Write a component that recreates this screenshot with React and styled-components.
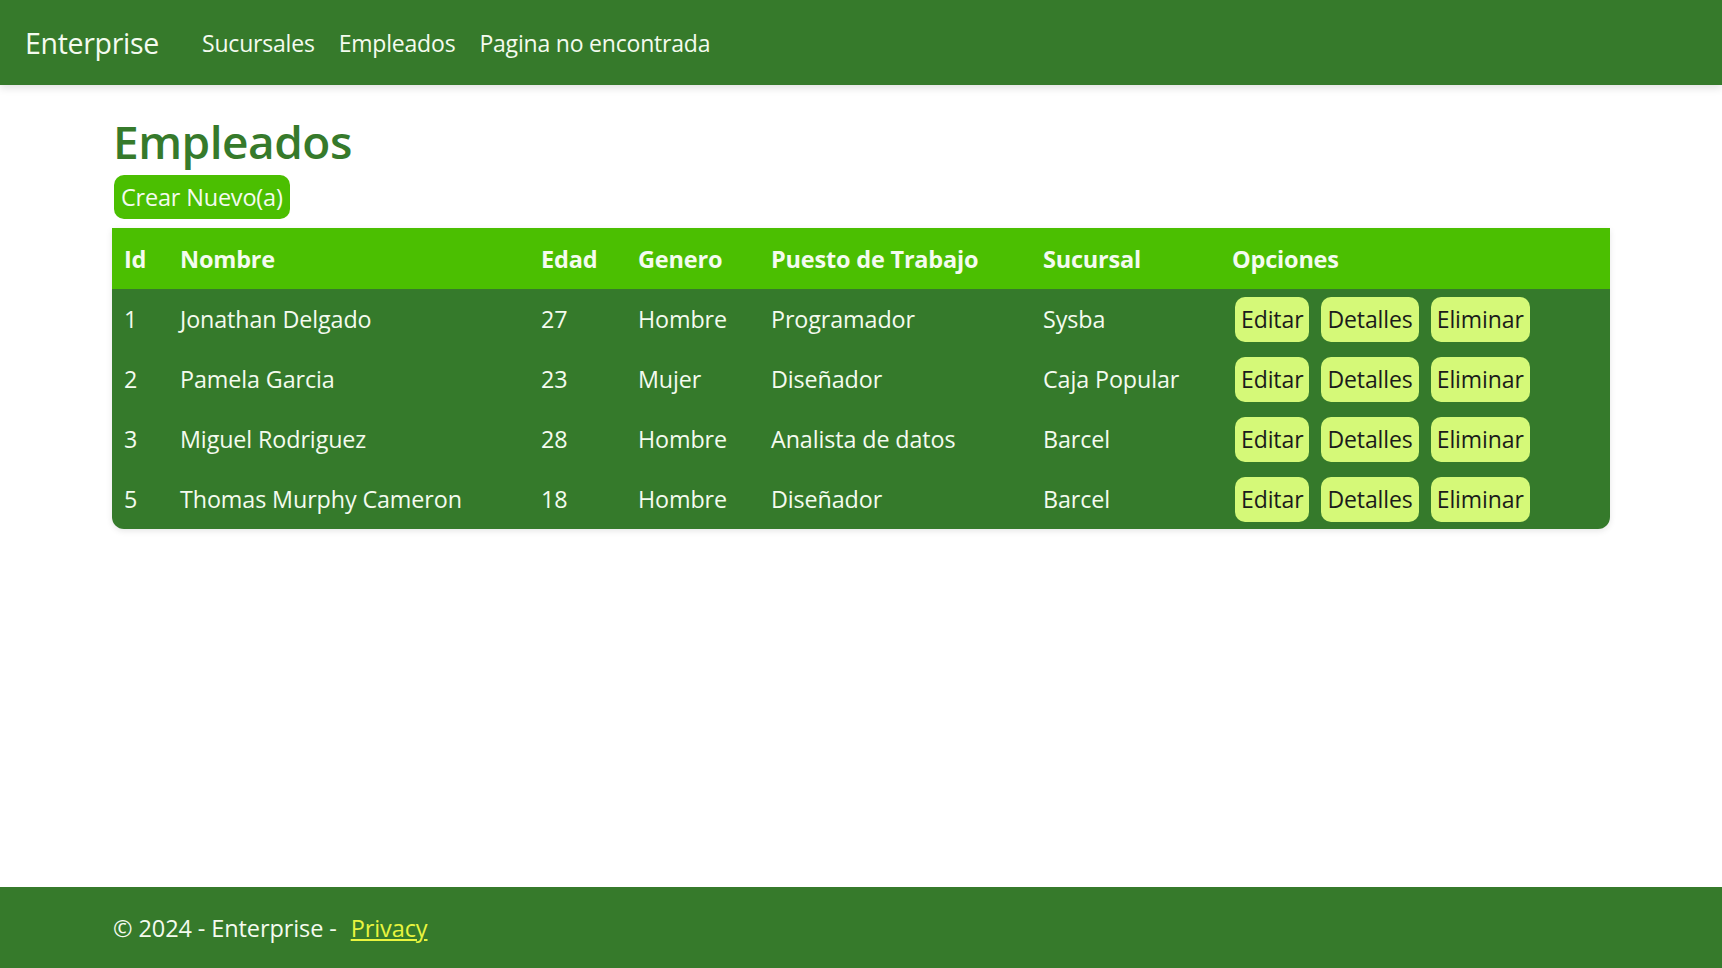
import React from 'react';
import styled, { createGlobalStyle } from 'styled-components';

const empleados = [
  { id: 1, nombre: 'Jonathan Delgado', edad: 27, genero: 'Hombre', puesto: 'Programador', sucursal: 'Sysba' },
  { id: 2, nombre: 'Pamela Garcia', edad: 23, genero: 'Mujer', puesto: 'Diseñador', sucursal: 'Caja Popular' },
  { id: 3, nombre: 'Miguel Rodriguez', edad: 28, genero: 'Hombre', puesto: 'Analista de datos', sucursal: 'Barcel' },
  { id: 5, nombre: 'Thomas Murphy Cameron', edad: 18, genero: 'Hombre', puesto: 'Diseñador', sucursal: 'Barcel' },
];

const columns = [
  { label: 'Id', width: 56 },
  { label: 'Nombre', width: 361 },
  { label: 'Edad', width: 97 },
  { label: 'Genero', width: 133 },
  { label: 'Puesto de Trabajo', width: 272 },
  { label: 'Sucursal', width: 189 },
  { label: 'Opciones', width: 390 },
];

const GlobalStyle = createGlobalStyle`
  html, body {
    margin: 0;
    padding: 0;
  }
  body {
    font-family: "Open Sans", "Noto Sans", sans-serif;
    background: #fff;
  }
`;

const App = () => {
  return (
    <>
      <GlobalStyle />
      <Page>
        <NavBar>
          <Brand href="#">Enterprise</Brand>
          <NavLinks>
            <NavLink href="#">Sucursales</NavLink>
            <NavLink href="#">Empleados</NavLink>
            <NavLink href="#">Pagina no encontrada</NavLink>
          </NavLinks>
        </NavBar>

        <Main>
          <Heading>Empleados</Heading>
          <CreateButton>Crear Nuevo(a)</CreateButton>
          <Table>
            <colgroup>
              {columns.map((c) => (
                <col key={c.label} style={{ width: c.width }} />
              ))}
            </colgroup>
            <thead>
              <tr>
                {columns.map((c) => (
                  <Th key={c.label}>{c.label}</Th>
                ))}
              </tr>
            </thead>
            <tbody>
              {empleados.map((e) => (
                <tr key={e.id}>
                  <Td>{e.id}</Td>
                  <Td>{e.nombre}</Td>
                  <Td>{e.edad}</Td>
                  <Td>{e.genero}</Td>
                  <Td>{e.puesto}</Td>
                  <Td>{e.sucursal}</Td>
                  <Td>
                    <Actions>
                      <ActionButton>Editar</ActionButton>
                      <ActionButton>Detalles</ActionButton>
                      <ActionButton>Eliminar</ActionButton>
                    </Actions>
                  </Td>
                </tr>
              ))}
            </tbody>
          </Table>
        </Main>

        <Footer>
          <span>© 2024 - Enterprise - </span>
          <FooterLink href="#">Privacy</FooterLink>
        </Footer>
      </Page>
    </>
  );
};

const Page = styled.div`
  display: flex;
  flex-direction: column;
  min-height: 100vh;
`;

const NavBar = styled.nav`
  height: 85px;
  background: #367a2b;
  display: flex;
  align-items: center;
  padding: 0 25px;
  box-sizing: border-box;
  box-shadow: 0 3px 8px rgba(0, 0, 0, 0.12);
  position: relative;
  z-index: 1;
`;

const Brand = styled.a`
  color: #f4fbef;
  font-size: 28.5px;
  text-decoration: none;
  margin-right: 43px;
  letter-spacing: -0.3px;
`;

const NavLinks = styled.div`
  display: flex;
  gap: 24px;
`;

const NavLink = styled.a`
  color: #f4fbef;
  font-size: 23px;
  text-decoration: none;
  letter-spacing: -0.2px;
`;

const Main = styled.main`
  flex: 1;
  padding: 0 112px;
`;

const Heading = styled.h1`
  margin: 29px 0 6px 1px;
  color: #367a2b;
  font-size: 46px;
  font-weight: 600;
  line-height: 1.2;
  letter-spacing: -0.5px;
`;

const CreateButton = styled.button`
  display: block;
  margin: 0 0 9px 2px;
  height: 44px;
  padding: 0 7px;
  border: none;
  border-radius: 10px;
  background: #4bbf01;
  color: #f4fbef;
  font-family: inherit;
  font-size: 23.5px;
  letter-spacing: -0.2px;
  cursor: pointer;
`;

const Table = styled.table`
  width: 100%;
  border-collapse: separate;
  border-spacing: 0;
  table-layout: fixed;
  border-radius: 0 0 12px 12px;
  overflow: hidden;
  background: #357a2b;
  box-shadow: 0 2px 6px rgba(0, 0, 0, 0.1);
`;

const Th = styled.th`
  background: #4bbf01;
  color: #f4fbef;
  text-align: left;
  font-size: 23.5px;
  font-weight: 700;
  letter-spacing: -0.2px;
  height: 61px;
  padding: 0 12px;
  white-space: nowrap;
`;

const Td = styled.td`
  color: #f4fbef;
  font-size: 23.3px;
  letter-spacing: -0.1px;
  height: 60px;
  padding: 0 12px;
  white-space: nowrap;
`;

const Actions = styled.div`
  display: flex;
  gap: 12px;
  margin-left: 3px;
`;

const ActionButton = styled.button`
  height: 45px;
  padding: 0 6px;
  border: none;
  border-radius: 10px;
  background: #d5f978;
  color: #1b1b1b;
  font-family: inherit;
  font-size: 23px;
  letter-spacing: -0.1px;
  cursor: pointer;
`;

const Footer = styled.footer`
  height: 81px;
  background: #367a2b;
  color: #f4fbef;
  display: flex;
  align-items: center;
  padding: 0 113px;
  font-size: 23.5px;
  letter-spacing: -0.1px;
  white-space: pre;
`;

const FooterLink = styled.a`
  color: #e9f53f;
  margin-left: 8px;
`;

export default App;
